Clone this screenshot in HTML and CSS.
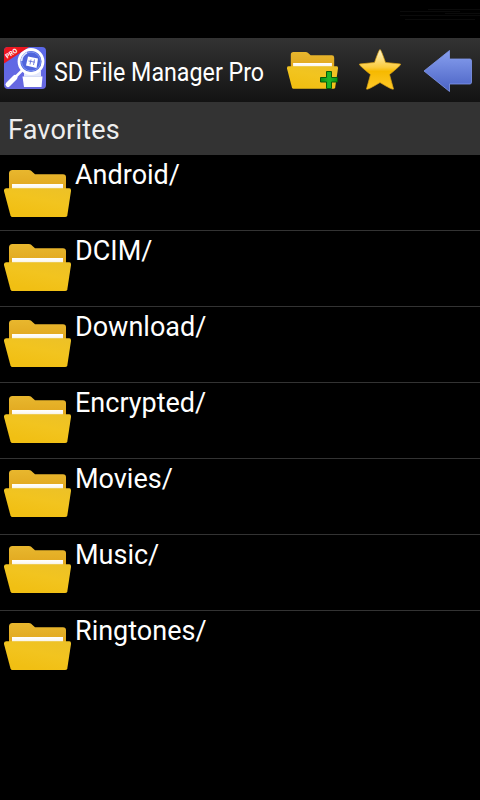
FILE: index.html
```html
<!DOCTYPE html>
<html lang="en">
<head>
    <meta charset="UTF-8">
    <title>SD File Manager Pro</title>
    <meta name="viewport" content="width=device-width, initial-scale=1.0">
    <link rel="stylesheet" href="styles.css">
</head>
<body>
    <svg class="defs" width="0" height="0">
        <defs>
            <linearGradient id="back" x1="0" y1="0" x2="0" y2="1">
                <stop offset="0" stop-color="#e8b72e"/>
                <stop offset="1" stop-color="#e0a51c"/>
            </linearGradient>
            <linearGradient id="front" x1="1" y1="0" x2=".5" y2="1">
                <stop offset="0" stop-color="#ecc128"/>
                <stop offset=".5" stop-color="#f2c41f"/>
                <stop offset="1" stop-color="#f1bf13"/>
            </linearGradient>
            <linearGradient id="paper" x1="0" y1="0" x2="0" y2="1">
                <stop offset="0" stop-color="#fff"/>
                <stop offset=".6" stop-color="#fbf8f0"/>
                <stop offset="1" stop-color="#e6dcb8"/>
            </linearGradient>
            <linearGradient id="gold" x1="0" y1="0" x2="0" y2="1">
                <stop offset="0" stop-color="#fff6cf"/>
                <stop offset=".45" stop-color="#fbcb3c"/>
                <stop offset=".55" stop-color="#f6b900"/>
                <stop offset="1" stop-color="#ffc928"/>
            </linearGradient>
            <linearGradient id="blue" x1="0" y1="0" x2="0" y2="1">
                <stop offset="0" stop-color="#88a0ef"/>
                <stop offset="1" stop-color="#4a62c4"/>
            </linearGradient>
            <linearGradient id="app" x1="0" y1="0" x2="0" y2="1">
                <stop offset="0" stop-color="#5a68e8"/>
                <stop offset="1" stop-color="#6868e0"/>
            </linearGradient>
            <linearGradient id="green" x1="0" y1="0" x2="1" y2="0">
                <stop offset="0" stop-color="#078f12"/>
                <stop offset=".5" stop-color="#22b82a"/>
                <stop offset="1" stop-color="#069413"/>
            </linearGradient>
            <symbol id="folder" viewBox="0 0 67 48">
                <path fill="url(#back)" d="M5 22V3.500Q5 0 8.500 0H25Q27 0 28.500 2L31 4.300H59Q62 4.300 62 7.300V22Z"/>
                <path fill="url(#paper)" d="M8 14H59V19.500H8Z"/>
                <path fill="url(#front)" d="M2.300 18.300H65Q67.400 18.300 67 21L63.300 45.500Q63 47 61 47H8.500Q7 47 6.500 45.500L0 21Q-.3 18.300 2.300 18.300Z"/>
            </symbol>
        </defs>
    </svg>

    <div class="status">
        <svg width="80" height="14" viewBox="0 0 80 14">
            <path stroke="#0b0b0b" d="M28 .500H80M0 2.500H60M45 4.500H80M0 6.500H80M5 10.500H75"/>
        </svg>
    </div>
    <header>
        <svg class="logo" width="42" height="42" viewBox="0 0 42 42">
            <clipPath id="round"><rect width="42" height="42" rx="4"/></clipPath>
            <g clip-path="url(#round)">
                <rect width="42" height="42" fill="url(#app)"/>
                <path fill="#e3e8fb" d="M20 24H37V30H20Z"/>
                <path fill="#fff" d="M18.500 29.500H38.500L37.500 40H20Z"/>
                <path stroke="#c3c9ef" stroke-width=".6" d="M20 29.500H38"/>
                <path stroke="#fff" stroke-width="5" stroke-linecap="round" d="M4 37.500L11 30.500"/>
                <path stroke="#fff" stroke-width="2.500" d="M11 30.500L19 22.500"/>
                <circle cx="27" cy="14.500" r="12" fill="#5065dc" stroke="#fff" stroke-width="2.800"/>
                <circle cx="27" cy="14.500" r="9.500" fill="none" stroke="#7f96f5" stroke-width="1"/>
                <path fill="none" stroke="#dce6ff" stroke-width="1.600" d="M17.500 14Q18 8 23 5.800"/>
                <path fill="#fff" d="M24 9.500L34 11.500L32.500 21L22 18.500Z"/>
                <path stroke="#5967d8" stroke-width=".8" d="M24.500 14L31 15.200M27 12.500L26 17.500M30.500 12.500L29.500 18"/>
                <path fill="#ed1720" d="M0 0H25L0 16.500Z"/>
                <text class="ribbon" transform="translate(3.200 11.800) rotate(-34)">PRO</text>
            </g>
        </svg>
        <h1><span>SD File Manager Pro</span></h1>
        <svg class="add" width="52" height="38" viewBox="0 0 52 38">
            <svg width="51" height="37.500" preserveAspectRatio="none" viewBox="0 0 67 48"><use href="#folder" width="67" height="48"/></svg>
            <path fill="url(#green)" stroke="#075c0b" d="M39.500 19.500H44.500V25.500H50.500V30H44.500V36.500H39.500V30H33.500V25.500H39.500Z"/>
        </svg>
        <svg class="star" width="44" height="44" viewBox="0 0 44 44">
            <path fill="url(#gold)" stroke="#dda313" stroke-width=".7" stroke-linejoin="round" d="M22 1.500Q23 1.500 27.500 14.500L42.500 16Q43.500 17 31.500 26.500L35.500 41Q35 42.500 22 34.500Q9 42.500 8.500 41L12.500 26.500Q.5 17 1.500 16L16.500 14.500Q21 1.500 22 1.500Z"/>
        </svg>
        <svg class="arrow" width="50" height="44" viewBox="0 0 50 44">
            <path fill="url(#blue)" stroke="#8298ec" stroke-width=".8" stroke-linejoin="round" d="M1 22L26.500 1.500V10H47Q48.500 10 48.500 12V33Q48.500 35 47 35H26.500V42.500Z"/>
        </svg>
    </header>
    <h2>Favorites</h2>
    <ul>
        <li class="low"><svg><use href="#folder"/></svg><span class="name">Android/</span></li>
        <li><svg><use href="#folder"/></svg><span class="name">DCIM/</span></li>
        <li><svg><use href="#folder"/></svg><span class="name">Download/</span></li>
        <li><svg><use href="#folder"/></svg><span class="name">Encrypted/</span></li>
        <li class="high"><svg><use href="#folder"/></svg><span class="name">Movies/</span></li>
        <li class="high"><svg><use href="#folder"/></svg><span class="name">Music/</span></li>
        <li class="last"><svg><use href="#folder"/></svg><span class="name">Ringtones/</span></li>
    </ul>
</body>
</html>
```
FILE: styles.css
```css
*{ margin: 0; padding: 0; list-style: none; box-sizing: border-box}
html,body{
    height: 100%;
    overflow: hidden;
}
body{
    background: #000;
    color: #fff;
    font-family: Roboto, "Liberation Sans", sans-serif;
}
svg{
    display: block;
    flex: none;
}
.defs{
    position: absolute;
}
.status{
    height: 38px;
    padding: 9px 0 0 400px;
}
header{
    display: flex;
    height: 64px;
    padding-left: 4px;
    background: linear-gradient(#333,#131313);
}
.logo{
    margin-top: 9px;
}
.ribbon{
    font-size: 6.5px;
    font-weight: bold;
    fill: #fff;
}
h1{
    width: 241px;
    padding-left: 8px;
    font-size: 25px;
    font-weight: normal;
    line-height: 70px;
    white-space: nowrap;
}
h1 span{
    display: inline-block;
    transform: scaleX(.93);
    transform-origin: left;
}
.add{
    margin-top: 14px;
}
.star{
    margin: 10px 0 0 19px;
}
.arrow{
    margin: 11px 0 0 21px;
}
h2{
    height: 53px;
    padding-left: 8px;
    background: #333;
    color: #eee;
    font-size: 27px;
    font-weight: normal;
    line-height: 57px;
    letter-spacing: .2px;
}
li{
    display: flex;
    height: 76px;
    padding-left: 4px;
    border-bottom: 1px solid #333;
}
li svg{
    width: 67px;
    height: 48px;
    margin-top: 13px;
}
li.low svg{
    margin-top: 15px;
}
li.high svg{
    margin-top: 11px;
}
li.last{
    border-bottom: 0;
}
li.last svg{
    margin-top: 12px;
}
.name{
    padding-left: 4px;
    font-size: 27px;
    line-height: 41px;
}
```
